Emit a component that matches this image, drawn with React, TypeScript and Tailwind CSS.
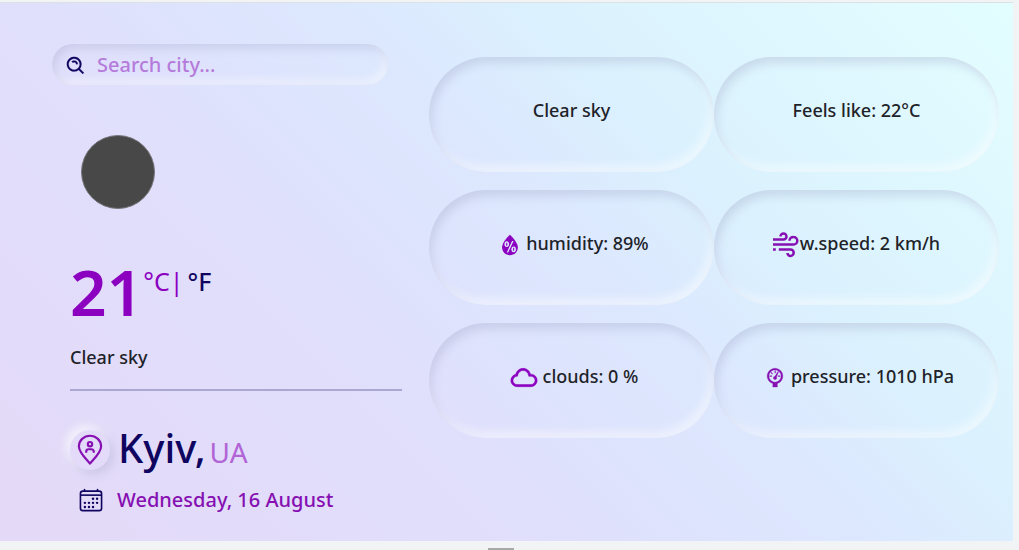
import type { ReactNode } from "react";
import { BiSearchAlt } from "react-icons/bi";
import { IoCalendarOutline } from "react-icons/io5";
import { WiBarometer, WiCloud, WiHumidity } from "react-icons/wi";

function PinIcon() {
  return (
    <svg viewBox="0 0 28 34" className="h-8 w-7" fill="none" stroke="currentColor" strokeWidth="2.3" strokeLinejoin="round" aria-hidden="true">
      <path d="M14 31.5C10 26.5 2.2 19.5 2.2 13.2a11.8 11.3 0 0 1 23.6 0C25.8 19.5 18 26.5 14 31.5Z" />
      <circle cx="14" cy="10.8" r="2.3" />
      <path d="M10 20v-1.4a2.4 2.4 0 0 1 2.4-2.4h3.2a2.4 2.4 0 0 1 2.4 2.4V20" />
    </svg>
  );
}

function WindIcon() {
  return (
    <svg viewBox="0 0 26 26" className="mt-1 mr-px size-[26px] text-[#8610b2]" fill="none" stroke="currentColor" strokeWidth="2.5" aria-hidden="true">
      <path d="M0 7.5h10.5a3 3 0 0 0 0-6 3 3 0 0 0-3 3" />
      <path d="M0 12.5h20.5a3.8 3.8 0 0 0 0-7.6 3.8 3.8 0 0 0-4 3.8" />
      <path d="M0 17.5h2.8M5.8 17.5h11.7a3.2 3.2 0 0 1 0 6.4 3 3 0 0 1-3-3" />
    </svg>
  );
}

function Card({ icon, children }: { icon?: ReactNode; children: ReactNode }) {
  return (
    <div className="flex h-[115px] items-center justify-center rounded-full pb-[10px] text-lg font-medium text-[#1e2329] shadow-[inset_3px_6px_10px_rgba(151,157,193,0.3),inset_-4px_-6px_10px_rgba(255,255,255,0.5)]">
      {icon}
      <p>{children}</p>
    </div>
  );
}

export default function App() {
  return (
    <div className="min-h-screen bg-[#f1f3f5] pt-[2px] pr-[6px] font-['Noto_Sans',sans-serif]">
      <main className="grid grid-cols-[350fr_570fr] gap-x-[27px] border-t border-[#dce1e6] bg-linear-[45deg,#e4d9f7,#e0dffc_35%,#dce8fe_57%,#dbf2fe_70%,#e3feff] pr-[14px] pb-[25px] pl-[52px]">
        <section className="pt-[41px]">
          <label className="mr-[14px] flex h-[41px] items-center gap-[10px] rounded-full pl-[13px] shadow-[inset_3px_4px_10px_rgba(151,157,193,0.3),inset_-4px_-5px_8px_rgba(255,255,255,0.5)]">
            <BiSearchAlt className="mt-[2px] size-[22px] shrink-0 text-[#0f0560]" strokeWidth="0.2" />
            <input aria-label="Search city" placeholder="Search city..." className="min-w-0 flex-1 bg-transparent text-xl font-medium outline-none placeholder:text-[#b57bdb]" />
          </label>
          <div className="pl-[18px]">
            <div className="mt-[50px] ml-[11px] size-[74px] rounded-full border border-[#77777c] bg-[#484848]" />
            <div className="mt-[48px] flex h-[72px] items-start text-[#8c00c0]">
              <span className="text-[64px] leading-[70px] font-semibold">21</span>
              <div className="flex gap-1 pt-2 text-[25px] leading-8">
                <button type="button">°C|</button>
                <button type="button" className="font-medium text-[#0f0560]">°F</button>
              </div>
            </div>
            <p className="mt-[14px] text-lg font-medium text-[#1e2329]">Clear sky</p>
            <hr className="mt-[18px] border-t-2 border-[#aaa7d3]" />
            <div className="mt-[35px] flex h-12 items-center">
              <span className="flex size-10 items-center justify-center rounded-full text-[#8610b2] shadow-[4px_4px_10px_rgba(151,157,193,0.3),-4px_-4px_10px_rgba(255,255,255,0.7)]">
                <PinIcon />
              </span>
              <h1 className="flex items-baseline gap-1 pl-2 text-[40px] leading-12 font-medium text-[#0f0560]">
                Kyiv,<span className="text-[28px] font-normal text-[#b164d6]">UA</span>
              </h1>
            </div>
            <div className="mt-[10px] flex h-8 items-center gap-[13px] pl-2 text-xl font-medium text-[#8610b2]">
              <IoCalendarOutline className="size-[26px] text-[#0f0560]" />
              <time>Wednesday, 16 August</time>
            </div>
          </div>
        </section>
        <section className="grid auto-rows-min grid-cols-2 gap-y-[18px] pt-[54px]">
          <Card>Clear sky</Card>
          <Card>Feels like: 22°C</Card>
          <Card icon={<WiHumidity className="mt-1 size-8 text-[#8c00c0]" />}>humidity: 89%</Card>
          <Card icon={<WindIcon />}>w.speed: 2 km/h</Card>
          <Card icon={<WiCloud className="mt-1 size-[38px] text-[#8c00c0]" strokeWidth="0.4" stroke="currentColor" />}>clouds: 0 %</Card>
          <Card icon={<WiBarometer className="mt-1 size-8 text-[#8610b2]" stroke="currentColor" strokeWidth="0.3" />}>pressure: 1010 hPa</Card>
        </section>
      </main>
      <div className="pt-[7px] pr-[11px]">
        <div className="mx-auto h-[2px] w-[26px] bg-[#a8a8a8]" />
      </div>
    </div>
  );
}
